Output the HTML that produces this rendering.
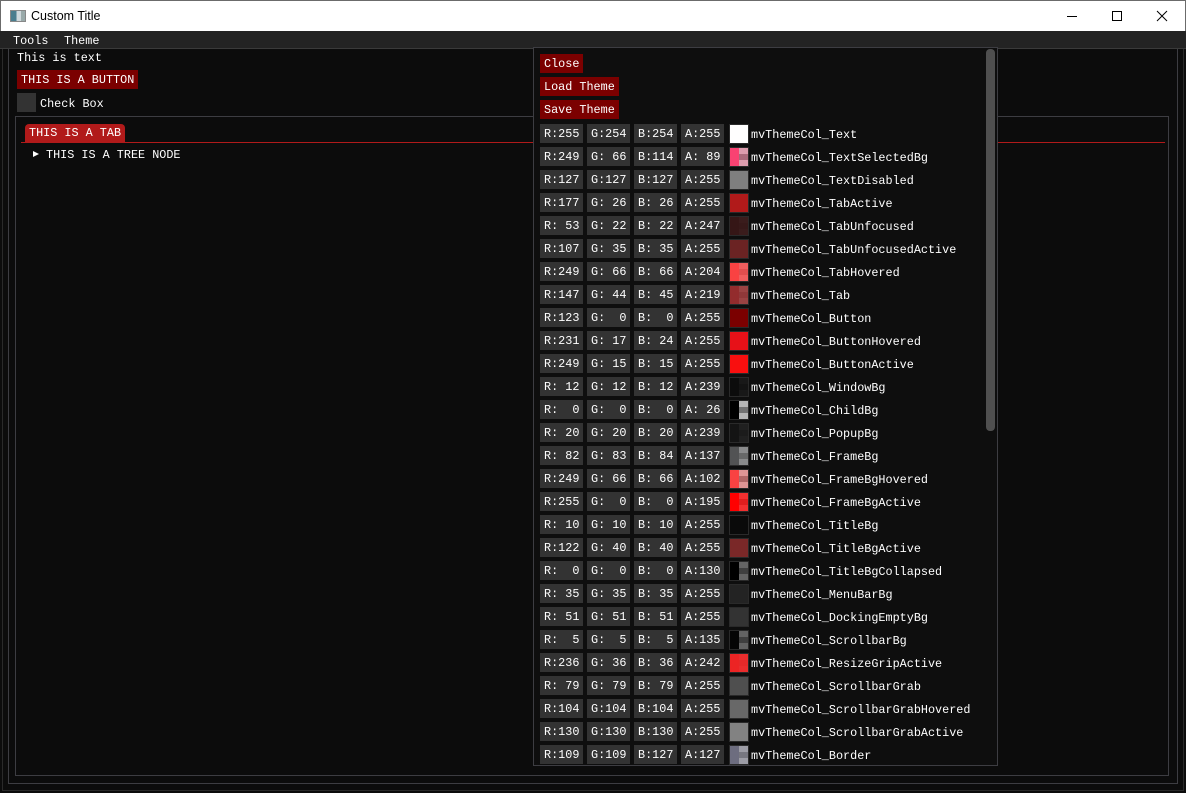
<!DOCTYPE html>
<html><head><meta charset="utf-8"><style>
*{margin:0;padding:0;box-sizing:border-box}
body{width:1186px;height:793px;background:#0c0c0c;position:relative;overflow:hidden;font-family:"Liberation Mono",monospace;font-size:11.8px;color:#fff}
.a{position:absolute}
#tb{left:0;top:0;width:1186px;height:31px;background:#fff;border:1px solid #6b6b6b;border-bottom:none;font-family:"Liberation Sans",sans-serif;font-size:12.5px;color:#000}
#mb{left:0;top:31px;width:1186px;height:18px;background:#232323;border-bottom:1px solid #3a3a3a}
.btn{background:#7b0000;height:19px;line-height:20px;padding:0 4px;white-space:pre}
.box{background:#333;height:19px;line-height:20px;width:43px;padding-left:4px;white-space:pre}
.sw{width:18px;height:18px;box-shadow:0 0 0 1px #2a2a2a}
</style></head><body>
<div class="a" id="tb">
 <div class="a" style="left:9px;top:9px;width:16px;height:12px;border:1px solid #888;background:linear-gradient(90deg,#4a7d8e 0 40%,#cfd8dc 40% 70%,#9aa 70%)"></div>
 <div class="a" style="left:30px;top:8px">Custom Title</div>
 <div class="a" style="left:1066px;top:15px;width:10px;height:1px;background:#000"></div>
 <div class="a" style="left:1111px;top:10px;width:10px;height:10px;border:1px solid #000"></div>
 <svg class="a" style="left:1155px;top:9px" width="12" height="12"><path d="M1 1L11 11M11 1L1 11" stroke="#000" stroke-width="1"/></svg>
</div>
<div class="a" id="mb"><span class="a" style="left:13px;top:3px">Tools</span><span class="a" style="left:64px;top:3px">Theme</span></div>
<div class="a" style="left:2px;top:49px;width:1182px;height:742px;border:1px solid #2a2a2a;border-top:none"></div>
<div class="a" style="left:8px;top:49px;width:1170px;height:735px;border:1px solid #3d3d42;border-top:none"></div>
<div class="a" style="left:15px;top:116px;width:1154px;height:660px;border:1px solid #3d3d42"></div>
<div class="a" style="left:17px;top:51px">This is text</div>
<div class="a btn" style="left:17px;top:70px">THIS IS A BUTTON</div>
<div class="a" style="left:17px;top:93px;width:19px;height:19px;background:#333"></div>
<div class="a" style="left:40px;top:97px">Check Box</div>
<div class="a" style="left:25px;top:124px;height:18px;line-height:19px;padding:0 4px;background:#b11a1a;border-radius:4px 4px 0 0">THIS IS A TAB</div>
<div class="a" style="left:21px;top:142px;width:1144px;height:1px;background:#b11a1a"></div>
<div class="a" style="left:33px;top:151px;width:0;height:0;border-left:6px solid #fff;border-top:3.5px solid transparent;border-bottom:3.5px solid transparent"></div>
<div class="a" style="left:46px;top:148px">THIS IS A TREE NODE</div>
<div class="a" style="left:533px;top:47px;width:465px;height:719px;background:#0e0e0e;border:1px solid #3d3d42"></div>
<div class="a" style="left:986px;top:49px;width:9px;height:382px;background:#4f4f4f;border-radius:4px"></div>
<div class="a btn" style="left:540px;top:54px">Close</div>
<div class="a btn" style="left:540px;top:77px">Load Theme</div>
<div class="a btn" style="left:540px;top:100px">Save Theme</div>
<div id="rows"></div>
<script>
var d=[[255,254,254,255,"Text"],[249,66,114,89,"TextSelectedBg"],[127,127,127,255,"TextDisabled"],[177,26,26,255,"TabActive"],[53,22,22,247,"TabUnfocused"],[107,35,35,255,"TabUnfocusedActive"],[249,66,66,204,"TabHovered"],[147,44,45,219,"Tab"],[123,0,0,255,"Button"],[231,17,24,255,"ButtonHovered"],[249,15,15,255,"ButtonActive"],[12,12,12,239,"WindowBg"],[0,0,0,26,"ChildBg"],[20,20,20,239,"PopupBg"],[82,83,84,137,"FrameBg"],[249,66,66,102,"FrameBgHovered"],[255,0,0,195,"FrameBgActive"],[10,10,10,255,"TitleBg"],[122,40,40,255,"TitleBgActive"],[0,0,0,130,"TitleBgCollapsed"],[35,35,35,255,"MenuBarBg"],[51,51,51,255,"DockingEmptyBg"],[5,5,5,135,"ScrollbarBg"],[236,36,36,242,"ResizeGripActive"],[79,79,79,255,"ScrollbarGrab"],[104,104,104,255,"ScrollbarGrabHovered"],[130,130,130,255,"ScrollbarGrabActive"],[109,109,127,127,"Border"]];
function p(n){n=""+n;while(n.length<3)n=" "+n;return n}
function bl(c,a,bg){return Math.round(c*a/255+bg*(1-a/255))}
var h="";d.forEach(function(r,i){var y=124+i*23;
var L=["R","G","B","A"],x=[540,587,634,681];
for(var k=0;k<4;k++)h+='<div class="a box" style="left:'+x[k]+'px;top:'+y+'px">'+L[k]+":"+p(r[k])+'</div>';
var c="rgb("+r[0]+","+r[1]+","+r[2]+")";
var c1="rgb("+bl(r[0],r[3],204)+","+bl(r[1],r[3],204)+","+bl(r[2],r[3],204)+")";
var c2="rgb("+bl(r[0],r[3],128)+","+bl(r[1],r[3],128)+","+bl(r[2],r[3],128)+")";
var right=r[3]==255?c:"linear-gradient(180deg,"+c1+" 0 33%,"+c2+" 33% 66%,"+c1+" 66%)";
h+='<div class="a sw" style="left:730px;top:'+(y+1)+'px;background:'+c+'"></div>';
h+='<div class="a" style="left:739px;top:'+(y+1)+'px;width:9px;height:18px;background:'+right+'"></div>';
h+='<div class="a" style="left:751px;top:'+(y+4)+'px">mvThemeCol_'+r[4]+'</div>';});
document.getElementById("rows").innerHTML=h;
</script>
</body></html>
